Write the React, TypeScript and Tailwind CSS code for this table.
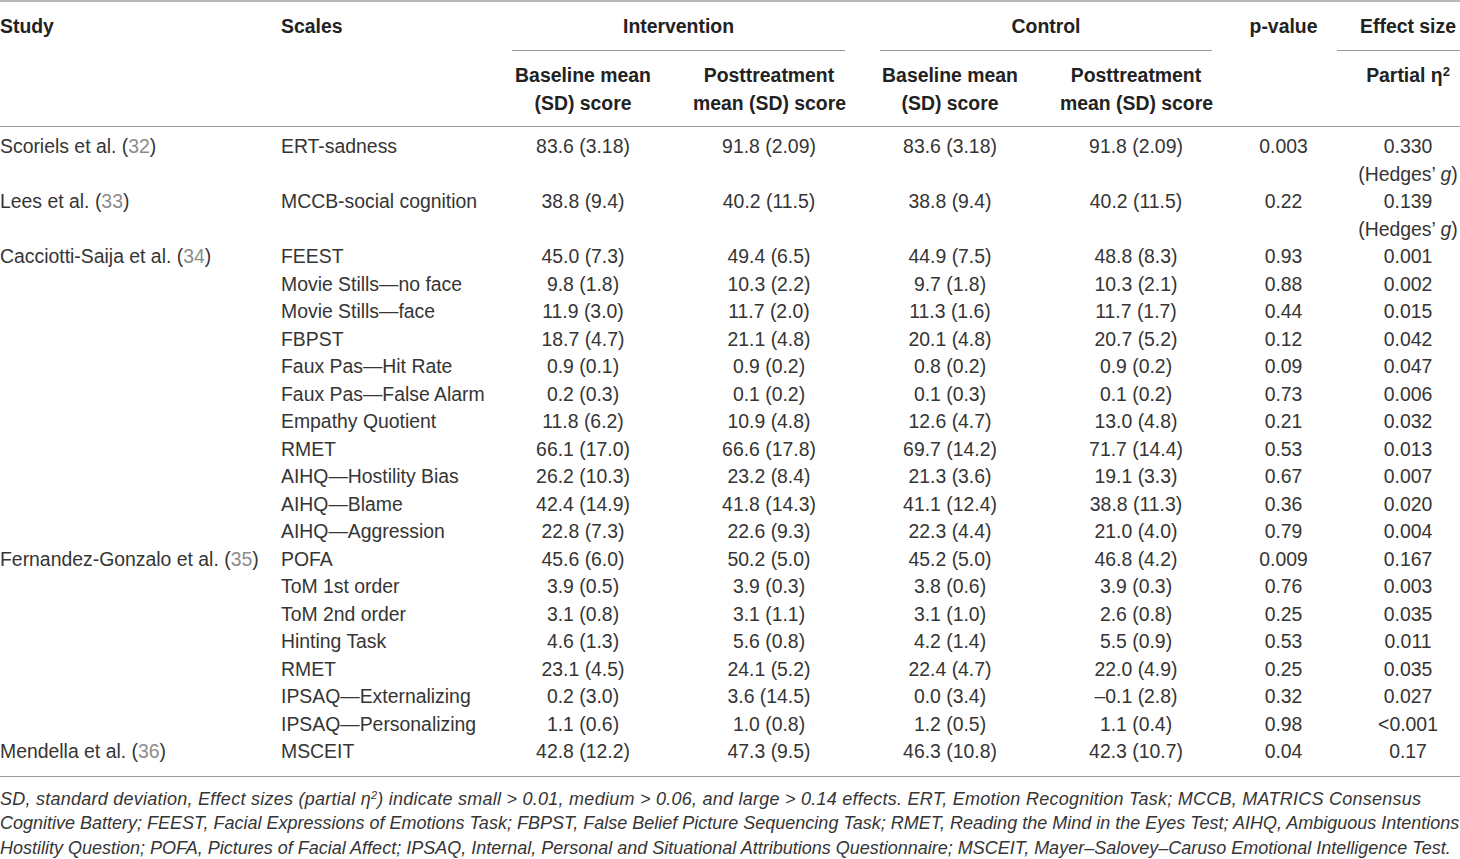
import React from "react";

type Row = {
  study?: string;
  cite?: string;
  scale: string;
  ib: string;
  ip: string;
  cb: string;
  cp: string;
  p: string;
  e: string;
  hedges?: boolean;
};

const rows: Row[] = [
  { study: "Scoriels et al. ", cite: "32", scale: "ERT-sadness", ib: "83.6 (3.18)", ip: "91.8 (2.09)", cb: "83.6 (3.18)", cp: "91.8 (2.09)", p: "0.003", e: "0.330", hedges: true },
  { study: "Lees et al. ", cite: "33", scale: "MCCB-social cognition", ib: "38.8 (9.4)", ip: "40.2 (11.5)", cb: "38.8 (9.4)", cp: "40.2 (11.5)", p: "0.22", e: "0.139", hedges: true },
  { study: "Cacciotti-Saija et al. ", cite: "34", scale: "FEEST", ib: "45.0 (7.3)", ip: "49.4 (6.5)", cb: "44.9 (7.5)", cp: "48.8 (8.3)", p: "0.93", e: "0.001" },
  { scale: "Movie Stills—no face", ib: "9.8 (1.8)", ip: "10.3 (2.2)", cb: "9.7 (1.8)", cp: "10.3 (2.1)", p: "0.88", e: "0.002" },
  { scale: "Movie Stills—face", ib: "11.9 (3.0)", ip: "11.7 (2.0)", cb: "11.3 (1.6)", cp: "11.7 (1.7)", p: "0.44", e: "0.015" },
  { scale: "FBPST", ib: "18.7 (4.7)", ip: "21.1 (4.8)", cb: "20.1 (4.8)", cp: "20.7 (5.2)", p: "0.12", e: "0.042" },
  { scale: "Faux Pas—Hit Rate", ib: "0.9 (0.1)", ip: "0.9 (0.2)", cb: "0.8 (0.2)", cp: "0.9 (0.2)", p: "0.09", e: "0.047" },
  { scale: "Faux Pas—False Alarm", ib: "0.2 (0.3)", ip: "0.1 (0.2)", cb: "0.1 (0.3)", cp: "0.1 (0.2)", p: "0.73", e: "0.006" },
  { scale: "Empathy Quotient", ib: "11.8 (6.2)", ip: "10.9 (4.8)", cb: "12.6 (4.7)", cp: "13.0 (4.8)", p: "0.21", e: "0.032" },
  { scale: "RMET", ib: "66.1 (17.0)", ip: "66.6 (17.8)", cb: "69.7 (14.2)", cp: "71.7 (14.4)", p: "0.53", e: "0.013" },
  { scale: "AIHQ—Hostility Bias", ib: "26.2 (10.3)", ip: "23.2 (8.4)", cb: "21.3 (3.6)", cp: "19.1 (3.3)", p: "0.67", e: "0.007" },
  { scale: "AIHQ—Blame", ib: "42.4 (14.9)", ip: "41.8 (14.3)", cb: "41.1 (12.4)", cp: "38.8 (11.3)", p: "0.36", e: "0.020" },
  { scale: "AIHQ—Aggression", ib: "22.8 (7.3)", ip: "22.6 (9.3)", cb: "22.3 (4.4)", cp: "21.0 (4.0)", p: "0.79", e: "0.004" },
  { study: "Fernandez-Gonzalo et al. ", cite: "35", scale: "POFA", ib: "45.6 (6.0)", ip: "50.2 (5.0)", cb: "45.2 (5.0)", cp: "46.8 (4.2)", p: "0.009", e: "0.167" },
  { scale: "ToM 1st order", ib: "3.9 (0.5)", ip: "3.9 (0.3)", cb: "3.8 (0.6)", cp: "3.9 (0.3)", p: "0.76", e: "0.003" },
  { scale: "ToM 2nd order", ib: "3.1 (0.8)", ip: "3.1 (1.1)", cb: "3.1 (1.0)", cp: "2.6 (0.8)", p: "0.25", e: "0.035" },
  { scale: "Hinting Task", ib: "4.6 (1.3)", ip: "5.6 (0.8)", cb: "4.2 (1.4)", cp: "5.5 (0.9)", p: "0.53", e: "0.011" },
  { scale: "RMET", ib: "23.1 (4.5)", ip: "24.1 (5.2)", cb: "22.4 (4.7)", cp: "22.0 (4.9)", p: "0.25", e: "0.035" },
  { scale: "IPSAQ—Externalizing", ib: "0.2 (3.0)", ip: "3.6 (14.5)", cb: "0.0 (3.4)", cp: "–0.1 (2.8)", p: "0.32", e: "0.027" },
  { scale: "IPSAQ—Personalizing", ib: "1.1 (0.6)", ip: "1.0 (0.8)", cb: "1.2 (0.5)", cp: "1.1 (0.4)", p: "0.98", e: "<0.001" },
  { study: "Mendella et al. ", cite: "36", scale: "MSCEIT", ib: "42.8 (12.2)", ip: "47.3 (9.5)", cb: "46.3 (10.8)", cp: "42.3 (10.7)", p: "0.04", e: "0.17" },
];

const GRID =
  "grid grid-cols-[281px_231px_142px_39px_152px_35px_140px_40px_152px_18px_107px_19px_104px]";

export default function App() {
  return (
    <div
      className="w-[1460px] h-[859px] overflow-hidden bg-white text-[#353535]"
      style={{ fontFamily: '"Liberation Sans", Arial, sans-serif' }}
    >
      <div className="h-[2px] bg-[#b8b8b8]" />
      {/* header row 1 */}
      <div className={`${GRID} text-[19.4px] leading-[28px] font-bold text-[#222222]`}>
        <div className="col-start-1 pt-[10px]">Study</div>
        <div className="col-start-2 pt-[10px]">Scales</div>
        <div className="col-start-3 col-span-3 pt-[10px] pb-[10px] text-center border-b border-[#9a9a9a]">Intervention</div>
        <div className="col-start-7 col-span-3 pt-[10px] pb-[10px] text-center border-b border-[#9a9a9a]">Control</div>
        <div className="col-start-11 pt-[10px] text-center">p-value</div>
        <div className="col-start-12 col-span-2 pt-[10px] pb-[10px] pl-[19px] text-center border-b border-[#9a9a9a]">Effect size</div>
      </div>
      {/* header row 2 */}
      <div className={`${GRID} text-[19.4px] leading-[28px] font-bold text-[#222222] border-b border-[#9a9a9a]`}>
        <div className="col-start-3 pt-[10px] pb-[9px] text-center">Baseline mean<br />(SD) score</div>
        <div className="col-start-5 pt-[10px] pb-[9px] text-center whitespace-nowrap">Posttreatment<br />mean (SD) score</div>
        <div className="col-start-7 pt-[10px] pb-[9px] text-center">Baseline mean<br />(SD) score</div>
        <div className="col-start-9 pt-[10px] pb-[9px] text-center whitespace-nowrap">Posttreatment<br />mean (SD) score</div>
        <div className="col-start-13 pt-[10px] text-center">
          Partial η<sup className="text-[13px]">2</sup>
        </div>
      </div>
      {/* body */}
      <div className="pt-[6px] pb-[10px] border-b border-[#9a9a9a]">
        {rows.map((r, i) => (
          <div key={i} className={`${GRID} text-[19.4px] leading-[27.5px] whitespace-nowrap`}>
            <div className="col-start-1">
              {r.study ? (
                <>
                  {r.study}(<span className="text-[#8c8c8c]">{r.cite}</span>)
                </>
              ) : null}
            </div>
            <div className="col-start-2">{r.scale}</div>
            <div className="col-start-3 text-center">{r.ib}</div>
            <div className="col-start-5 text-center">{r.ip}</div>
            <div className="col-start-7 text-center">{r.cb}</div>
            <div className="col-start-9 text-center">{r.cp}</div>
            <div className="col-start-11 text-center">{r.p}</div>
            <div className="col-start-13 text-center">
              {r.e}
              {r.hedges ? (
                <>
                  <br />
                  (Hedges’ <i>g</i>)
                </>
              ) : null}
            </div>
          </div>
        ))}
      </div>
      {/* footnote */}
      <div className="pt-[10px] italic text-[18px] leading-[24.5px] whitespace-nowrap text-[#353535]">
        <div className="tracking-[0.25px]">
          SD, standard deviation, Effect sizes (partial η<sup className="text-[11px]">2</sup>) indicate small &gt; 0.01, medium &gt; 0.06, and large &gt; 0.14 effects. ERT, Emotion Recognition Task; MCCB, MATRICS Consensus
        </div>
        <div>
          Cognitive Battery; FEEST, Facial Expressions of Emotions Task; FBPST, False Belief Picture Sequencing Task; RMET, Reading the Mind in the Eyes Test; AIHQ, Ambiguous Intentions
        </div>
        <div>
          Hostility Question; POFA, Pictures of Facial Affect; IPSAQ, Internal, Personal and Situational Attributions Questionnaire; MSCEIT, Mayer–Salovey–Caruso Emotional Intelligence Test.
        </div>
      </div>
    </div>
  );
}
